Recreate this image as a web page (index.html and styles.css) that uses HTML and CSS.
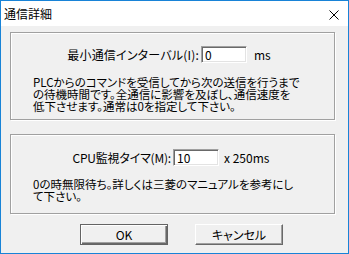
FILE: index.html
```html
<!DOCTYPE html>
<html lang="ja">
<head>
    <meta charset="UTF-8">
    <title>通信詳細</title>
    <link rel="stylesheet" href="styles.css">
</head>
<body>
    <div class="window">
        <div class="titlebar">
            <span class="title">通信詳細</span>
            <svg class="close" width="10" height="10" viewBox="0 0 10 10">
                <path d="M0.5 0.5 L9.5 9.5 M9.5 0.5 L0.5 9.5" stroke="#000" stroke-width="1" fill="none"/>
            </svg>
        </div>

        <div class="content">
            <div class="group group-interval">
                <div class="field-row">
                    <label class="field-label label-interval">最小通信インターバル(I):</label>
                    <div class="edit">0</div>
                    <span class="unit unit-ms">ms</span>
                </div>
                <p class="note">PLCからのコマンドを受信してから次の送信を行うまで<br>の待機時間です。全通信に影響を及ぼし、通信速度を<br>低下させます。通常は0を指定して下さい。</p>
            </div>

            <div class="group group-timer">
                <div class="field-row">
                    <label class="field-label label-timer">CPU監視タイマ(M):</label>
                    <div class="edit">10</div>
                    <span class="unit unit-x">x 250ms</span>
                </div>
                <p class="note">0の時無限待ち。詳しくは三菱のマニュアルを参考にし<br>て下さい。</p>
            </div>

            <div class="buttons">
                <button class="btn btn-default">OK</button>
                <button class="btn">キャンセル</button>
            </div>
        </div>
    </div>
</body>
</html>
```

FILE: styles.css
```css
body {
    margin: 0;
    padding: 0;
    background-color: #F0F0F0;
    font-family: 'Noto Sans CJK JP', sans-serif;
    font-size: 12px;
    color: #000;
    font-feature-settings: "palt";
}
.window {
    width: 349px;
    height: 254px;
    box-sizing: border-box;
    border: 1px solid #1883D7;
    background-color: #F0F0F0;
}
.titlebar {
    height: 25px;
    background-color: #FFFFFF;
    display: flex;
    align-items: center;
    justify-content: space-between;
    padding: 0 9px 0 3px;
}
.title {
    font-size: 12px;
    line-height: 12px;
    margin-top: 1px;
}
.close {
    display: block;
    margin-top: 2px;
}
.content {
    padding: 6px 0 0 9px;
}
.group {
    width: 325px;
    box-sizing: border-box;
    border: 1px solid #A0A0A0;
    box-shadow: inset 1px 1px 0 #FFFFFF, 1px 1px 0 #FFFFFF;
}
.group-interval {
    height: 88px;
    padding-top: 13px;
}
.group-timer {
    height: 80px;
    margin-top: 14px;
    padding-top: 14px;
}
.field-row {
    display: flex;
    align-items: center;
    height: 17px;
}
.field-label {
    text-align: right;
    line-height: 12px;
}
.label-interval {
    width: 188px;
    letter-spacing: 0.2px;
}
.label-timer {
    width: 160px;
    letter-spacing: -0.2px;
}
.edit {
    width: 46px;
    height: 17px;
    box-sizing: border-box;
    margin-left: 2px;
    background-color: #FFFFFF;
    border-top: 1px solid #A0A0A0;
    border-left: 1px solid #A0A0A0;
    border-right: 1px solid #FFFFFF;
    border-bottom: 1px solid #FFFFFF;
    box-shadow: inset 1px 1px 0 #696969, inset -1px -1px 0 #E3E3E3;
    padding: 2px 0 0 3px;
    line-height: 12px;
}
.unit {
    line-height: 12px;
}
.unit-ms {
    margin-left: 7px;
}
.unit-x {
    margin-left: 5px;
}
.note {
    margin: 13px 0 0 22px;
    font-size: 11.5px;
    line-height: 12px;
    white-space: nowrap;
}
.group-timer .note {
    margin-top: 12px;
}
.buttons {
    display: flex;
    gap: 27px;
    padding: 10px 0 0 70px;
}
.btn {
    width: 88px;
    height: 21px;
    box-sizing: border-box;
    font-family: 'Noto Sans CJK JP', sans-serif;
    font-size: 12px;
    font-weight: normal;
    line-height: 12px;
    padding: 0;
    background-color: #F0F0F0;
    border-top: 1px solid #FFFFFF;
    border-left: 1px solid #FFFFFF;
    border-right: 1px solid #696969;
    border-bottom: 1px solid #696969;
    box-shadow: inset -1px -1px 0 #A0A0A0;
    font-feature-settings: "palt";
    color: #000;
}
.btn-default {
    border: 1px solid #646464;
    box-shadow: inset 1px 1px 0 #FFFFFF, inset -1px -1px 0 #696969, inset -2px -2px 0 #A0A0A0;
}
```
